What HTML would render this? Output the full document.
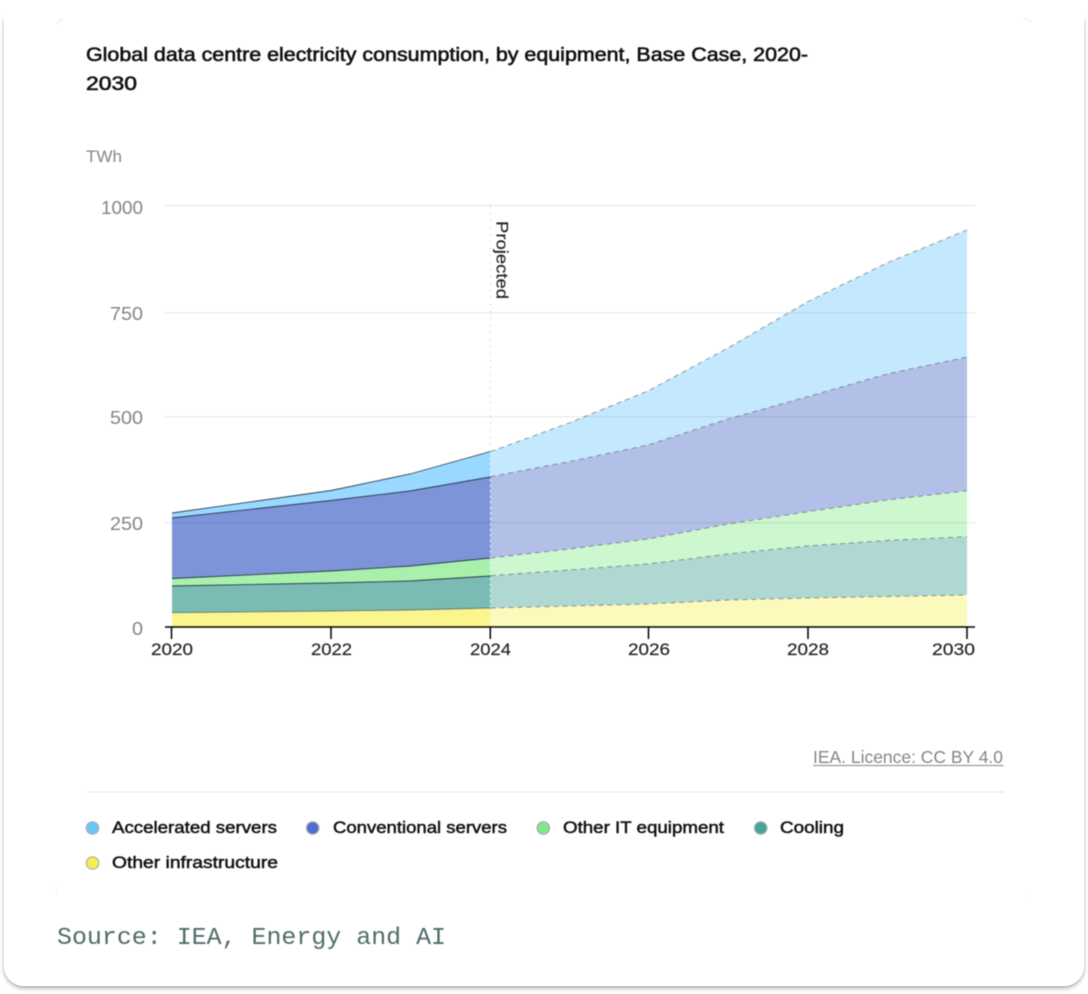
<!DOCTYPE html>
<html lang="en">
<head>
<meta charset="utf-8">
<title>Global data centre electricity consumption</title>
<style>
html,body{margin:0;padding:0;width:1088px;height:994px;background:#fff;overflow:hidden}
svg{display:block}
text{font-family:"Liberation Sans",sans-serif}
.blur{filter:blur(.4px)}
.y{font-size:18px;fill:#858585}
.x{font-size:17px;fill:#222;stroke:#222;stroke-width:.15}
.l{font-size:17px;fill:#111;stroke:#111;stroke-width:.5}
.t{font-size:19.5px;fill:#111;stroke:#111;stroke-width:.6}
</style>
</head>
<body>
<svg width="1088" height="994" viewBox="0 0 1088 994" xmlns="http://www.w3.org/2000/svg">
<defs>
<filter id="s" x="-5%" y="-5%" width="110%" height="110%">
<feDropShadow dx="0" dy="2.5" stdDeviation="2" flood-color="#000" flood-opacity=".3"/>
</filter>
</defs>
<rect x="4" y="4" width="1080" height="982" rx="20" fill="#fff" filter="url(#s)"/>
<rect x="4" y="-30" width="1080" height="60" fill="#fff"/>
<g class="blur">
<path d="M57 25a9 9 0 0 1 6-6M1024 18a9 9 0 0 1 7 4M56 888q0 5 3 7M1030 895h1" fill="none" stroke="#ececec" stroke-width="1"/>

<text class="t" x="86" y="61" textLength="722" lengthAdjust="spacingAndGlyphs">Global data centre electricity consumption, by equipment, Base Case, 2020-</text>
<text class="t" x="86" y="90" textLength="51" lengthAdjust="spacingAndGlyphs">2030</text>
<text x="86" y="162" font-size="17" fill="#858585" textLength="36" lengthAdjust="spacingAndGlyphs">TWh</text>

<!-- historic areas -->
<polygon fill="#9ad9ff" points="172,513 331,490.5 410,474 490.5,451.5 490.5,477 410,491 331,500.5 172,518"/>
<polygon fill="#7e94d9" points="172,518 331,500.5 410,491 490.5,477 490.5,558 410,566 331,571 172,578.5"/>
<polygon fill="#a8f0ac" points="172,578.5 331,571 410,566 490.5,558 490.5,576 410,581 331,583 172,586"/>
<polygon fill="#7abcb3" points="172,586 331,583 410,581 490.5,576 490.5,608 410,610 331,611 172,612.7"/>
<polygon fill="#faf58c" points="172,612.7 331,611 410,610 490.5,608 490.5,627 172,627"/>

<!-- projected areas -->
<polygon fill="#c4e9fe" points="490.5,451.7 569,423 648,391 728,348 807.7,301.7 887,263 967,230 967,357 887,374 807.7,396.7 728,419 648,445 569,461.7 490.5,476.7"/>
<polygon fill="#b2c0e8" points="490.5,476.7 569,461.7 648,445 728,419 807.7,396.7 887,374 967,357 967,490.7 887,500 807.7,511.7 728,524 648,539 569,549 490.5,558"/>
<polygon fill="#ccf7cf" points="490.5,558 569,549 648,539 728,524 807.7,511.7 887,500 967,490.7 967,536.7 887,540.5 807.7,546 728,554 648,564 569,570 490.5,575.7"/>
<polygon fill="#b0d8d3" points="490.5,575.7 569,570 648,564 728,554 807.7,546 887,540.5 967,536.7 967,595 887,596.5 807.7,598 728,600 648,604 569,606 490.5,608"/>
<polygon fill="#fbf9bb" points="490.5,608 569,606 648,604 728,600 807.7,598 887,596.5 967,595 967,627 490.5,627"/>

<!-- grid -->
<g stroke="#000" stroke-opacity=".1" stroke-width="1">
<line x1="165" x2="975" y1="205.5" y2="205.5"/>
<line x1="165" x2="975" y1="312.7" y2="312.7"/>
<line x1="165" x2="975" y1="416.7" y2="416.7"/>
<line x1="165" x2="975" y1="522.7" y2="522.7"/>
</g>

<!-- historic boundaries -->
<g fill="none" stroke="#1f2a44" stroke-width=".9" stroke-opacity=".9">
<polyline points="172,513 331,490.5 410,474 490.5,451.5"/>
<polyline points="172,518 331,500.5 410,491 490.5,477"/>
<polyline points="172,578.5 331,571 410,566 490.5,558"/>
<polyline points="172,586 331,583 410,581 490.5,576"/>
<polyline points="172,612.7 331,611 410,610 490.5,608" stroke-opacity=".55"/>
</g>
<!-- projected boundaries -->
<g fill="none" stroke="#555" stroke-width=".9" stroke-dasharray="5 4" stroke-opacity=".65">
<polyline points="490.5,451.7 569,423 648,391 728,348 807.7,301.7 887,263 967,230"/>
<polyline points="490.5,476.7 569,461.7 648,445 728,419 807.7,396.7 887,374 967,357"/>
<polyline points="490.5,558 569,549 648,539 728,524 807.7,511.7 887,500 967,490.7"/>
<polyline points="490.5,575.7 569,570 648,564 728,554 807.7,546 887,540.5 967,536.7"/>
<polyline points="490.5,608 569,606 648,604 728,600 807.7,598 887,596.5 967,595"/>
</g>

<!-- projected divider -->
<line x1="490.5" x2="490.5" y1="206" y2="451" stroke="#bcbcbc" stroke-width="1" stroke-dasharray="1 6"/>
<line x1="490.5" x2="490.5" y1="452" y2="627" stroke="#fff" stroke-width="1.2" stroke-dasharray="1.5 4"/>
<text x="0" y="0" font-size="16.5" fill="#222" stroke="#222" stroke-width=".15" transform="translate(496.5 221) rotate(90)" textLength="78" lengthAdjust="spacingAndGlyphs">Projected</text>

<!-- axis -->
<g stroke="#000" stroke-width="1.5">
<line x1="165" x2="975" y1="627" y2="627"/>
<line x1="171.5" x2="171.5" y1="627" y2="639"/>
<line x1="331" x2="331" y1="627" y2="639"/>
<line x1="490.3" x2="490.3" y1="627" y2="639"/>
<line x1="648.5" x2="648.5" y1="627" y2="639"/>
<line x1="808" x2="808" y1="627" y2="639"/>
<line x1="967" x2="967" y1="627" y2="639"/>
</g>

<!-- y labels -->
<text class="y" x="101" y="214" textLength="42" lengthAdjust="spacingAndGlyphs">1000</text>
<text class="y" x="110" y="320" textLength="33" lengthAdjust="spacingAndGlyphs">750</text>
<text class="y" x="110" y="424" textLength="33" lengthAdjust="spacingAndGlyphs">500</text>
<text class="y" x="110" y="530" textLength="33" lengthAdjust="spacingAndGlyphs">250</text>
<text class="y" x="132" y="635" textLength="11" lengthAdjust="spacingAndGlyphs">0</text>

<!-- x labels -->
<text class="x" x="151" y="655" textLength="42" lengthAdjust="spacingAndGlyphs">2020</text>
<text class="x" x="311" y="655" textLength="41" lengthAdjust="spacingAndGlyphs">2022</text>
<text class="x" x="470" y="655" textLength="41" lengthAdjust="spacingAndGlyphs">2024</text>
<text class="x" x="628" y="655" textLength="42" lengthAdjust="spacingAndGlyphs">2026</text>
<text class="x" x="787" y="655" textLength="42" lengthAdjust="spacingAndGlyphs">2028</text>
<text class="x" x="932" y="655" textLength="43" lengthAdjust="spacingAndGlyphs">2030</text>

<!-- licence -->
<text x="813" y="763" font-size="17.5" fill="#858585" textLength="190" lengthAdjust="spacingAndGlyphs">IEA. Licence: CC BY 4.0</text>
<line x1="813" x2="1003.5" y1="765.5" y2="765.5" stroke="#858585" stroke-width="1"/>
<line x1="86" x2="1004" y1="792" y2="792" stroke="#e8e8e8" stroke-width="1.2"/>

<!-- legend -->
<g stroke="#a9a9a9" stroke-width="1.2">
<circle cx="92.5" cy="828" r="6.2" fill="#6cc7f7"/>
<circle cx="312.7" cy="828" r="6.2" fill="#4f6fcf"/>
<circle cx="543.3" cy="828" r="6.2" fill="#7ee787"/>
<circle cx="760.7" cy="828" r="6.2" fill="#46a398"/>
<circle cx="92.5" cy="863" r="6.2" fill="#f6ee4f"/>
</g>
<text class="l" x="112" y="833" textLength="165" lengthAdjust="spacingAndGlyphs">Accelerated servers</text>
<text class="l" x="333" y="833" textLength="174" lengthAdjust="spacingAndGlyphs">Conventional servers</text>
<text class="l" x="563" y="833" textLength="161" lengthAdjust="spacingAndGlyphs">Other IT equipment</text>
<text class="l" x="780" y="833" textLength="64" lengthAdjust="spacingAndGlyphs">Cooling</text>
<text class="l" x="112" y="868" textLength="166" lengthAdjust="spacingAndGlyphs">Other infrastructure</text>

<!-- source -->
<text x="57" y="944" font-size="24.5" fill="#4f6c69" style="font-family:'Liberation Mono',monospace" textLength="389" lengthAdjust="spacingAndGlyphs">Source: IEA, Energy and AI</text>
</g>
</svg>
</body>
</html>
